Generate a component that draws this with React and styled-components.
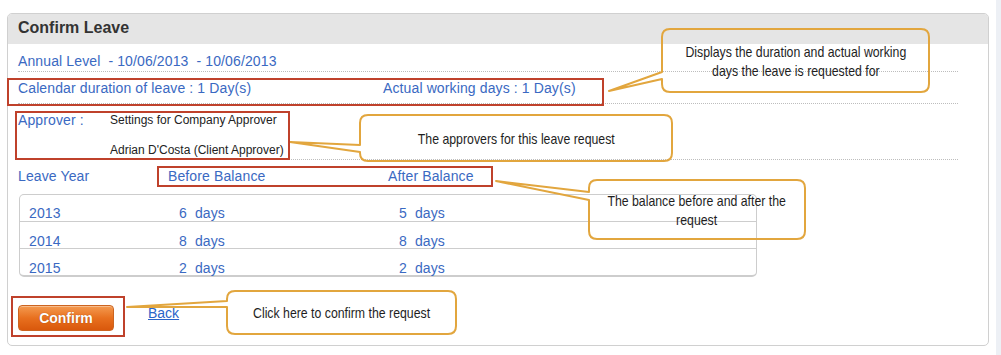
import React from 'react';
import styled, { createGlobalStyle } from 'styled-components';

const GlobalStyle = createGlobalStyle`
  body {
    margin: 0;
    background: #fff;
    font-family: 'Liberation Sans', Arial, sans-serif;
  }
`;

const BLUE = '#3a69c2';
const NARROW = 0.82;

const balances = [
  { year: '2013', before: '6  days', after: '5  days' },
  { year: '2014', before: '8  days', after: '8  days' },
  { year: '2015', before: '2  days', after: '2  days' },
];

const marks = [
  { x: 7, y: 78, w: 597, h: 28 },
  { x: 15, y: 111, w: 275, h: 49 },
  { x: 157, y: 166, w: 336, h: 21 },
  { x: 11, y: 296, w: 114, h: 41 },
];

const callouts = [
  { x: 662, y: 29, w: 267, h: 63, a: 72, b: 79, tx: 609, ty: 91, pad: 18, text: 'Displays the duration and actual working days the leave is requested for' },
  { x: 360, y: 115, w: 312, h: 46, a: 145, b: 152, tx: 290, ty: 142, pad: 18, text: 'The approvers for this leave request' },
  { x: 589, y: 180, w: 216, h: 59, a: 192, b: 200, tx: 496, ty: 181, pad: 14, text: 'The balance before and after the request' },
  { x: 227, y: 291, w: 229, h: 43, a: 301, b: 307, tx: 127, ty: 307, pad: 14, text: 'Click here to confirm the request' },
];

// rounded box with a wedge tail leaving its left side
const calloutPath = ({ x, y, w, h, a, b, tx, ty }) => {
  const r = 8;
  return `M${x + r} ${y} H${x + w - r} Q${x + w} ${y} ${x + w} ${y + r} V${y + h - r} Q${x + w} ${y + h} ${x + w - r} ${y + h} H${x + r} Q${x} ${y + h} ${x} ${y + h - r} V${b} L${tx} ${ty} L${x} ${a} V${y + r} Q${x} ${y} ${x + r} ${y} Z`;
};

const App = () => {
  return (
    <Page>
      <GlobalStyle />
      <Main>
        <Panel>
          <Header>Confirm Leave</Header>
          <Body>
            <Row $pt={9} $pb={2}>
              <Blue>{'Annual Level \u00a0- 10/06/2013 \u00a0- 10/06/2013'}</Blue>
            </Row>
            <Row $pt={8} $pb={7}>
              <Blue $w={365}>Calendar duration of leave : 1 Day(s)</Blue>
              <Blue>Actual working days : 1 Day(s)</Blue>
            </Row>
            <Row $pt={8} $pb={2}>
              <Blue $w={92}>Approver :</Blue>
              <Names>
                <span>Settings for Company Approver</span>
                <span>Adrian D'Costa (Client Approver)</span>
              </Names>
            </Row>
            <HeadRow>
              <Blue $w={150}>Leave Year</Blue>
              <Blue $w={220}>Before Balance</Blue>
              <Blue>After Balance</Blue>
            </HeadRow>
            <Table>
              {balances.map((b) => (
                <TableRow key={b.year}>
                  <Blue $w={150}>{b.year}</Blue>
                  <Blue $w={220}>{b.before}</Blue>
                  <Blue>{b.after}</Blue>
                </TableRow>
              ))}
            </Table>
            <Actions>
              <ConfirmButton type='button'>Confirm</ConfirmButton>
              <BackLink href='#'>Back</BackLink>
            </Actions>
          </Body>
        </Panel>
      </Main>
      <Scroll />

      <Overlay>
        <svg width='1001' height='355' viewBox='0 0 1001 355'>
          {callouts.map((c) => (
            <path key={c.text} d={calloutPath(c)} fill='none' stroke='#e2a63e' strokeWidth='2' strokeLinejoin='round' />
          ))}
        </svg>
        {marks.map((m, i) => (
          <Mark key={i} $x={m.x} $y={m.y} $w={m.w} $h={m.h} />
        ))}
        {callouts.map((c) => (
          <CalloutText key={c.text} $x={c.x} $y={c.y} $w={c.w} $h={c.h}>
            <CalloutLabel $w={(c.w - 2 * c.pad) / NARROW}>{c.text}</CalloutLabel>
          </CalloutText>
        ))}
      </Overlay>
    </Page>
  );
};

const Page = styled.div`
  position: relative;
  display: flex;
  width: 1001px;
  height: 355px;
  overflow: hidden;
`;

const Main = styled.div`
  flex: 1;
  padding: 13px 0 0 7px;
`;

const Scroll = styled.div`
  width: 5px;
  background: #edf0f5;
`;

const Panel = styled.div`
  width: 982px;
  box-sizing: border-box;
  border: 1px solid #d0d0d0;
  border-radius: 5px;
  overflow: hidden;
`;

const Header = styled.div`
  height: 30px;
  box-sizing: border-box;
  padding: 0 0 3px 10px;
  display: flex;
  align-items: center;
  background: #e5e5e5;
  color: #333;
  font-size: 16px;
  font-weight: bold;
`;

const Body = styled.div`
  padding: 0 30px 14px 10px;
`;

const Row = styled.div`
  display: flex;
  align-items: flex-start;
  padding: ${(p) => p.$pt}px 0 ${(p) => p.$pb}px;
  border-bottom: 1px dotted #bdbdbd;
`;

const Blue = styled.span`
  width: ${(p) => (p.$w ? `${p.$w}px` : 'auto')};
  flex-shrink: 0;
  color: ${BLUE};
  font-size: 14px;
  line-height: 16px;
  letter-spacing: 0.12px;
  white-space: pre;
`;

const Names = styled.div`
  display: flex;
  flex-direction: column;
  gap: 16px;
  padding-top: 1px;
  color: #222;
  font-size: 12px;
  line-height: 14px;
`;

const HeadRow = styled.div`
  display: flex;
  padding-top: 8px;
`;

const Table = styled.div`
  margin: 10px 0 0 1px;
  width: 738px;
  box-sizing: border-box;
  border: 1px solid #cdcdcd;
  border-bottom-width: 2px;
  border-radius: 5px;
`;

const TableRow = styled.div`
  display: flex;
  height: 26px;
  box-sizing: border-box;
  padding: 10px 0 0 9px;
  & + & {
    border-top: 1px solid #cdcdcd;
    height: 27px;
    padding-top: 11px;
  }
`;

const Actions = styled.div`
  display: flex;
  align-items: flex-start;
  gap: 34px;
  margin-top: 28px;
`;

const ConfirmButton = styled.button`
  width: 96px;
  height: 26px;
  padding: 0;
  border: 1px solid #cc6420;
  border-radius: 4px;
  background: linear-gradient(#f49a50, #e8701f 50%, #d9580c);
  box-shadow: inset 0 1px 0 rgba(255, 255, 255, 0.35);
  color: #fff;
  font-family: 'Liberation Sans', Arial, sans-serif;
  font-size: 14px;
  font-weight: bold;
  text-shadow: 0 0 1px #9c3f05;
  cursor: pointer;
`;

const BackLink = styled.a`
  color: #2a64c8;
  font-size: 14px;
  line-height: 16px;
  text-decoration: underline;
`;

const Overlay = styled.div`
  position: absolute;
  inset: 0;
  pointer-events: none;
  svg {
    position: absolute;
    left: 0;
    top: 0;
  }
`;

const Mark = styled.div`
  position: absolute;
  left: ${(p) => p.$x}px;
  top: ${(p) => p.$y}px;
  width: ${(p) => p.$w}px;
  height: ${(p) => p.$h}px;
  box-sizing: border-box;
  border: 2px solid #bf412b;
`;

const CalloutText = styled.div`
  position: absolute;
  left: ${(p) => p.$x}px;
  top: ${(p) => p.$y}px;
  width: ${(p) => p.$w}px;
  height: ${(p) => p.$h}px;
  display: flex;
  align-items: center;
  justify-content: center;
`;

// condensed look of the annotation font, squeezed from Liberation Sans
const CalloutLabel = styled.div`
  flex-shrink: 0;
  width: ${(p) => p.$w}px;
  transform: scaleX(${NARROW});
  text-align: center;
  color: #1e1e1e;
  font-family: 'Liberation Sans', Arial, sans-serif;
  font-size: 15px;
  line-height: 19px;
`;

export default App;
